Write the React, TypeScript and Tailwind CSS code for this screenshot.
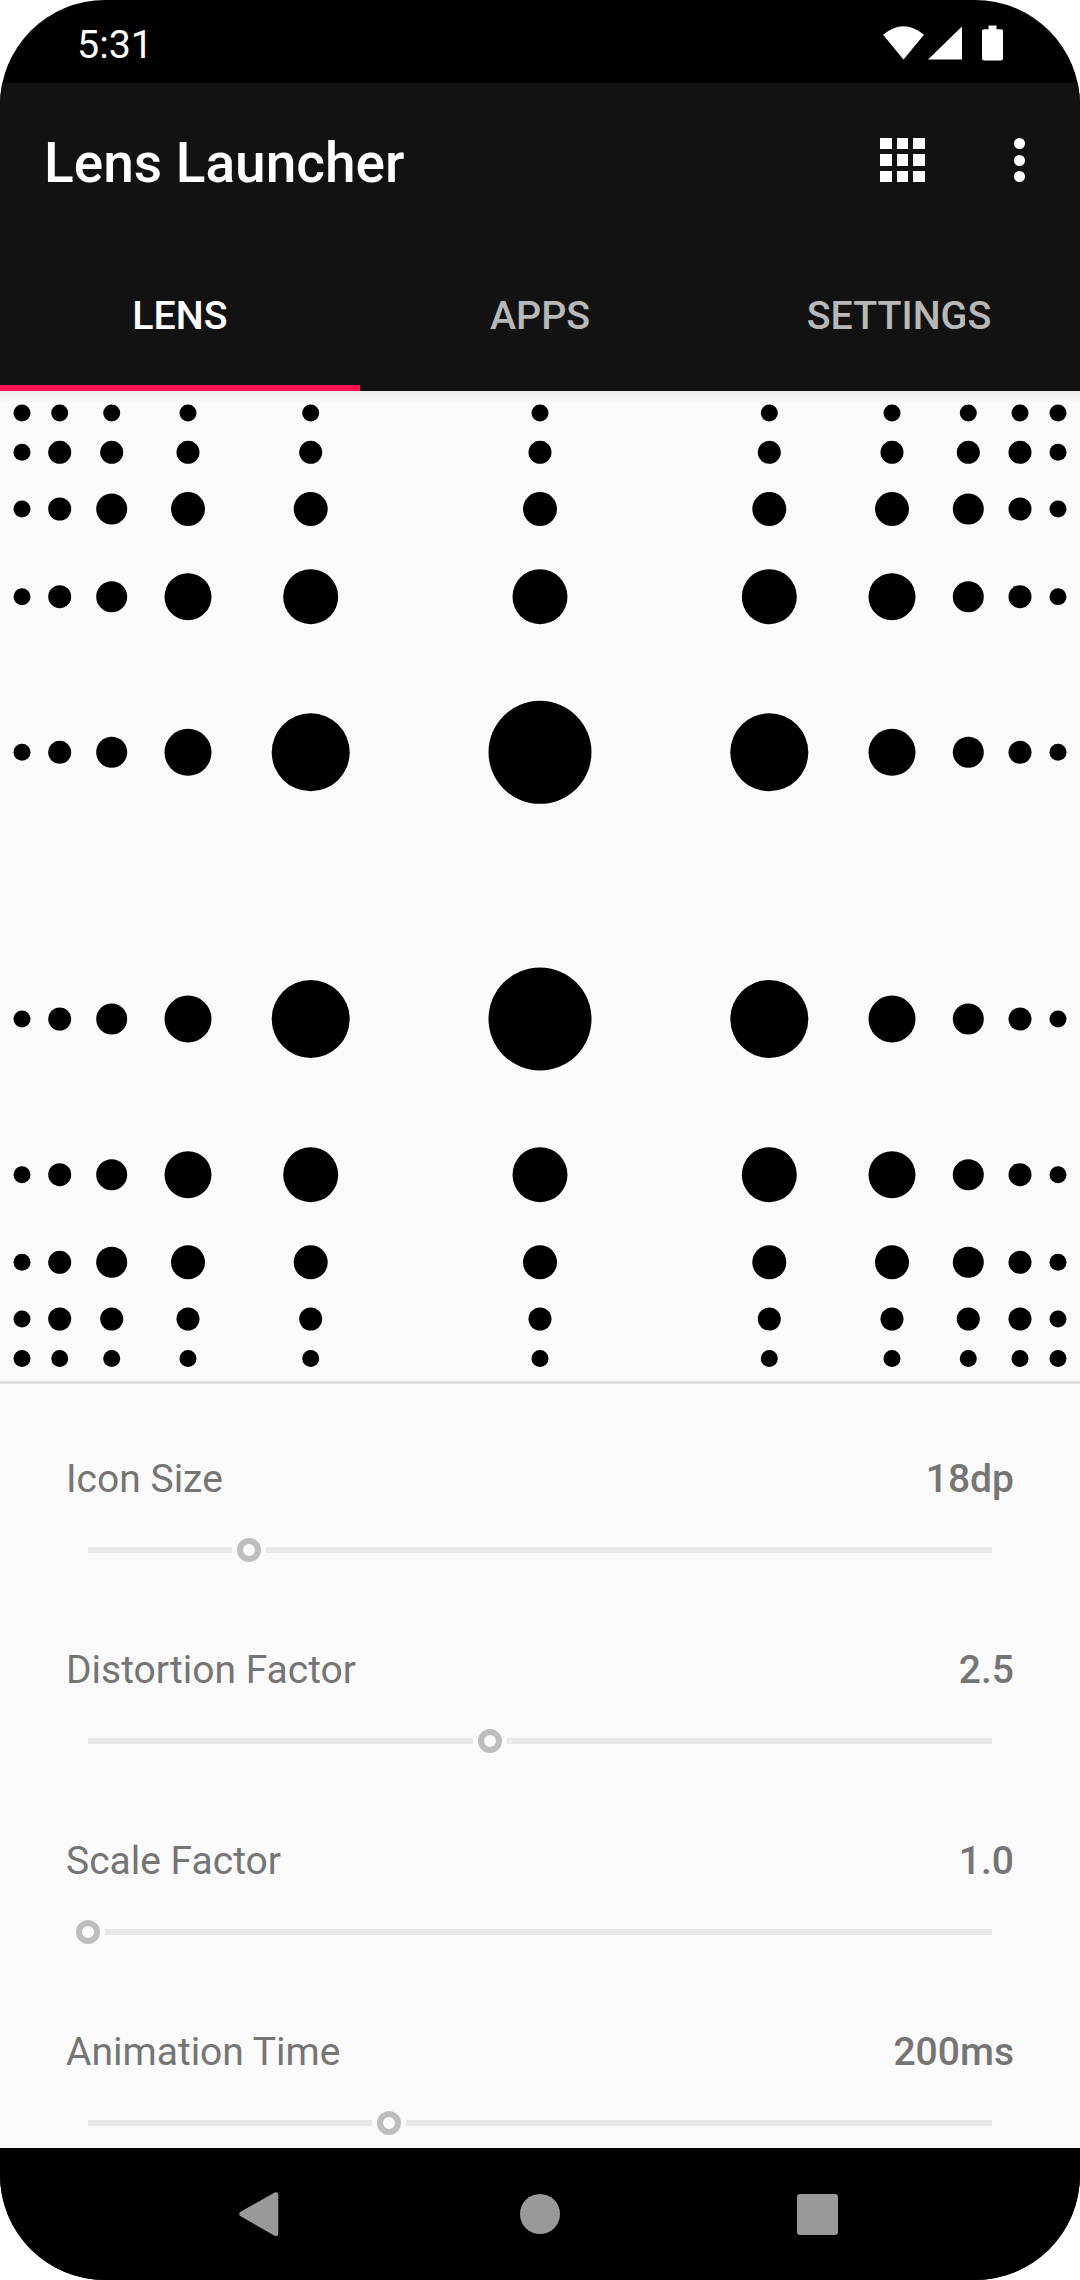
import React from "react";

const COL_X = [22, 59.7, 111.7, 188, 310.7, 540, 769.3, 892, 968.3, 1020, 1058];
const ROW_Y = [413, 452.3, 509, 596.7, 752.3, 1019, 1174.7, 1262.3, 1319, 1358.5];
const COL_D = [17, 23, 31, 47, 78, 103];
const ROW_D = [17, 23, 34, 55, 103];

function LensDots() {
  return (
    <svg width="1080" height="990" viewBox="0 391 1080 990" className="block">
      {ROW_Y.map((y, r) =>
        COL_X.map((x, c) => {
          const d = Math.min(ROW_D[Math.min(r, 9 - r)], COL_D[Math.min(c, 10 - c)]);
          return <circle key={`${r}-${c}`} cx={x} cy={y} r={d / 2} fill="#000" />;
        }),
      )}
    </svg>
  );
}

function StatusIcons() {
  return (
    <svg width="124" height="40" viewBox="0 0 124 40" fill="#fff" className="block">
      <path d="M2 12.8 Q22.5 -4.4 43 12.8 L22.5 37.5 Z" />
      <path d="M47 37.5 L81 4.5 L81 37.5 Z" />
      <path d="M101 9 Q101 7.2 103 7.2 L107.5 7.2 L107.5 3.5 L115.5 3.5 L115.5 7.2 L120 7.2 Q122 7.2 122 9 L122 36.5 Q122 38.5 120 38.5 L103 38.5 Q101 38.5 101 36.5 Z" />
    </svg>
  );
}

function GridIcon() {
  return (
    <div className="grid w-[45px] grid-cols-3 gap-[5px]">
      {Array.from({ length: 9 }).map((_, i) => (
        <span key={i} className="h-[11.5px] w-[11.5px] bg-white" />
      ))}
    </div>
  );
}

function MoreIcon() {
  return (
    <div className="flex flex-col gap-[5.5px]">
      <span className="h-[11px] w-[11px] rounded-full bg-white" />
      <span className="h-[11px] w-[11px] rounded-full bg-white" />
      <span className="h-[11px] w-[11px] rounded-full bg-white" />
    </div>
  );
}

function Setting({ label, value, thumb }: { label: string; value: string; thumb: number }) {
  return (
    <div className="h-[191px] shrink-0">
      <div className="flex h-[46px] items-center justify-between pl-[66px] pr-[66px] text-[39px] text-[#757575]">
        <span>{label}</span>
        <span className="font-medium">{value}</span>
      </div>
      <div className="relative mx-[88px] mt-[45px] h-[6px] bg-[#e8e8e8]">
        <span
          className="absolute top-[3px] h-[34px] w-[34px] -translate-x-1/2 -translate-y-1/2 rounded-full bg-[#fafafa]"
          style={{ left: thumb }}
        />
        <span
          className="absolute top-[3px] h-[24px] w-[24px] -translate-x-1/2 -translate-y-1/2 rounded-full border-[6px] border-[#bdbdbd] bg-[#fafafa]"
          style={{ left: thumb }}
        />
      </div>
    </div>
  );
}

export default function App() {
  return (
    <div className="h-[2280px] w-[1080px] bg-white font-['Roboto',sans-serif]">
      <div className="flex h-full flex-col overflow-hidden rounded-[105px] bg-black">
        {/* status bar */}
        <div className="flex h-[83px] shrink-0 items-center justify-between pl-[77px] pr-[75px] text-white">
          <span className="pt-[7px] text-[39.4px]">5:31</span>
          <StatusIcons />
        </div>

        {/* app bar + tabs */}
        <div className="h-[308px] shrink-0 bg-[#121212]">
          <div className="flex h-[154px] items-center justify-between pl-[44px] pr-[55.5px]">
            <span className="pt-[6px] text-[55px] font-medium text-white">Lens Launcher</span>
            <div className="flex items-center gap-[88.5px]">
              <GridIcon />
              <MoreIcon />
            </div>
          </div>
          <div className="grid h-[154px] grid-cols-3 text-[39.4px] font-medium text-[#b8b8b8]">
            <div className="flex flex-col">
              <span className="flex flex-1 items-center justify-center pt-[10px] text-white">LENS</span>
              <span className="h-[6px] bg-[#ff1050]" />
            </div>
            <span className="flex h-[148px] items-center justify-center pt-[10px]">APPS</span>
            <span className="flex h-[148px] items-center justify-center pr-[2px] pt-[10px]">SETTINGS</span>
          </div>
        </div>

        {/* lens preview */}
        <div className="relative h-[990px] shrink-0 bg-[#fafafa]">
          <div className="absolute inset-x-0 top-0 h-[12px] bg-gradient-to-b from-[#ececec] to-[#fafafa]" />
          <div className="relative">
            <LensDots />
          </div>
        </div>
        <div className="h-[3px] shrink-0 bg-[#e0e0e0]" />

        {/* sliders */}
        <div className="flex h-[764px] shrink-0 flex-col overflow-hidden bg-[#fafafa] pt-[72px]">
          <Setting label="Icon Size" value="18dp" thumb={161} />
          <Setting label="Distortion Factor" value="2.5" thumb={402} />
          <Setting label="Scale Factor" value="1.0" thumb={0} />
          <Setting label="Animation Time" value="200ms" thumb={301} />
        </div>

        {/* nav bar */}
        <div className="flex flex-1 items-start bg-black">
          <svg width="1080" height="132" viewBox="0 2148 1080 132" className="block">
            <path
              d="M241.8 2214 L275.8 2194.8 L275.8 2233.5 Z"
              fill="#999"
              stroke="#999"
              strokeWidth="5"
              strokeLinejoin="round"
            />
            <circle cx="540" cy="2214" r="20" fill="#999" />
            <rect x="797" y="2194" width="41" height="41" rx="3" fill="#999" />
          </svg>
        </div>
      </div>
    </div>
  );
}
